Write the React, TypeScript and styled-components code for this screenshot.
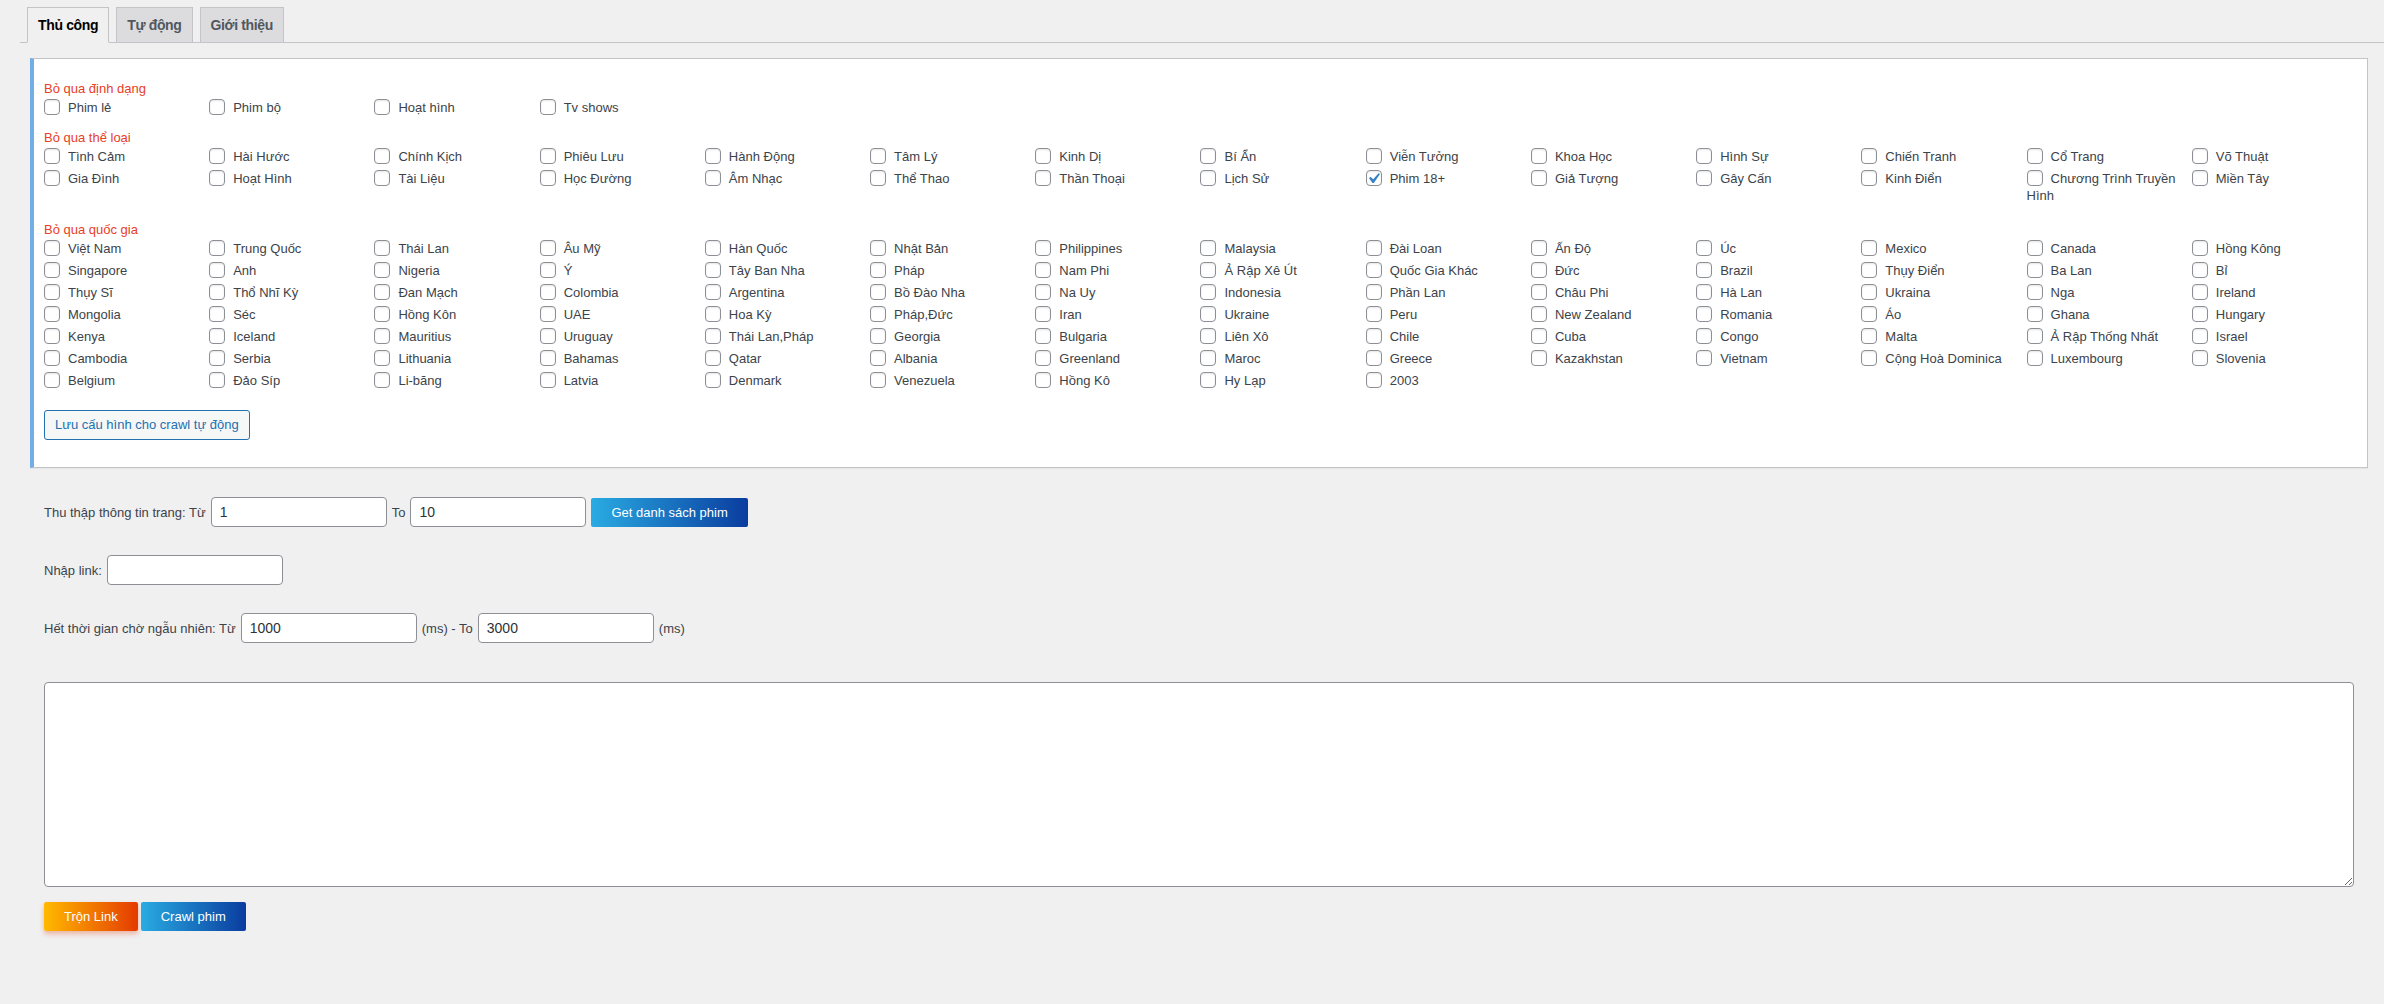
import React from "react";
import styled, { createGlobalStyle, css } from "styled-components";

const GlobalStyle = createGlobalStyle`
  html, body {
    margin: 0;
    padding: 0;
    background: #f0f0f1;
  }
  body {
    font-family: "Liberation Sans", Arial, sans-serif;
    font-size: 13px;
    color: #3c434a;
  }
  * { box-sizing: border-box; }
`;

const Page = styled.div`
  min-height: 1004px;
  padding-bottom: 40px;
`;

const TabBar = styled.nav`
  display: flex;
  gap: 7px;
  margin-left: 20px;
  padding: 7px 0 0 7px;
  border-bottom: 1px solid #c3c4c7;
`;

const Tab = styled.a<{ $active?: boolean }>`
  display: block;
  font-size: 14px;
  line-height: 24px;
  font-weight: 600;
  letter-spacing: -0.35px;
  padding: 5px 10px;
  border: 1px solid #c3c4c7;
  margin-bottom: -1px;
  text-decoration: none;
  white-space: nowrap;
  cursor: pointer;
  ${(p) =>
    p.$active
      ? css`
          background: #f0f0f1;
          color: #000;
          border-bottom-color: #f0f0f1;
        `
      : css`
          background: #dcdcde;
          color: #50575e;
        `}
`;

const Panel = styled.section`
  margin: 15px 16px 0 30px;
  background: #fff;
  border: 1px solid #c3c4c7;
  border-left: 4px solid #72aee6;
  box-shadow: 0 1px 1px rgba(0, 0, 0, 0.04);
  padding: 21px 10px 27px 10px;
`;

const Section = styled.div<{ $after: number }>`
  margin-bottom: ${(p) => p.$after}px;
`;

const SectionTitle = styled.div`
  color: #e8401f;
  font-size: 13px;
  line-height: 17px;
  margin-bottom: 2px;
`;

const OptionGrid = styled.div`
  display: grid;
  grid-template-columns: repeat(14, minmax(0, 1fr));
  row-gap: 5px;
`;

const Option = styled.label`
  display: block;
  font-size: 13px;
  line-height: 17px;
  color: #3c434a;
  padding-right: 10px;
  cursor: pointer;
`;

const Box = styled.span`
  position: relative;
  display: inline-block;
  vertical-align: middle;
  width: 16px;
  height: 16px;
  margin: -3px 8px 0 0;
  border: 1px solid #8c8f94;
  border-radius: 4px;
  background: #fff;
  box-shadow: inset 0 1px 2px rgba(0, 0, 0, 0.1);
`;

const Check = styled.svg`
  position: absolute;
  left: -4px;
  top: -3px;
  width: 21px;
  height: 21px;
`;

const SaveButton = styled.button`
  display: inline-block;
  margin-top: 21px;
  height: 30px;
  padding: 0 10px;
  border: 1px solid #2271b1;
  border-radius: 3px;
  background: #f6f7f7;
  color: #2271b1;
  font-family: inherit;
  font-size: 13px;
  line-height: 28px;
  cursor: pointer;
`;

const Form = styled.div`
  padding: 29px 30px 0 44px;
`;

const FieldRow = styled.div`
  display: flex;
  align-items: center;
  gap: 5px;
  height: 30px;
  margin-bottom: 28px;
  font-size: 13px;
  color: #3c434a;
`;

const TextInput = styled.input`
  width: 176px;
  height: 30px;
  padding: 0 8px;
  border: 1px solid #8c8f94;
  border-radius: 4px;
  background: #fff;
  color: #2c3338;
  font-family: inherit;
  font-size: 14px;
  box-shadow: 0 0 0 transparent;
`;

const gradients = {
  blue: "linear-gradient(90deg, #29abe2 0%, #0a3c9f 100%)",
  orange: "linear-gradient(90deg, #ffb900 0%, #e43b00 100%)",
};

const GradientButton = styled.button<{ $tone: "blue" | "orange" }>`
  height: 29px;
  padding: 0 20px;
  border: none;
  border-radius: 2px;
  background: ${(p) => gradients[p.$tone]};
  color: #fff;
  font-family: inherit;
  font-size: 13px;
  white-space: nowrap;
  cursor: pointer;
  ${(p) =>
    p.$tone === "orange" &&
    css`
      box-shadow: 0 3px 5px rgba(228, 70, 20, 0.35);
    `}
`;

const LogArea = styled.textarea`
  display: block;
  width: 100%;
  height: 205px;
  margin-top: 39px;
  border: 1px solid #8c8f94;
  border-radius: 4px;
  background: #fff;
  font-family: inherit;
  font-size: 14px;
  padding: 2px 6px;
`;

const Actions = styled.div`
  display: flex;
  gap: 3px;
  margin-top: 15px;
`;

const formats = ["Phim lẻ", "Phim bộ", "Hoạt hình", "Tv shows"];

const genres = [
  "Tình Cảm", "Hài Hước", "Chính Kịch", "Phiêu Lưu", "Hành Động", "Tâm Lý", "Kinh Dị",
  "Bí Ẩn", "Viễn Tưởng", "Khoa Học", "Hình Sự", "Chiến Tranh", "Cổ Trang", "Võ Thuật",
  "Gia Đình", "Hoạt Hình", "Tài Liệu", "Học Đường", "Âm Nhạc", "Thể Thao", "Thần Thoại",
  "Lịch Sử", "Phim 18+", "Giả Tượng", "Gây Cấn", "Kinh Điển", "Chương Trình Truyền Hình", "Miền Tây",
];

const countries = [
  "Việt Nam", "Trung Quốc", "Thái Lan", "Âu Mỹ", "Hàn Quốc", "Nhật Bản", "Philippines",
  "Malaysia", "Đài Loan", "Ấn Độ", "Úc", "Mexico", "Canada", "Hồng Kông",
  "Singapore", "Anh", "Nigeria", "Ý", "Tây Ban Nha", "Pháp", "Nam Phi",
  "Ả Rập Xê Út", "Quốc Gia Khác", "Đức", "Brazil", "Thụy Điển", "Ba Lan", "Bỉ",
  "Thụy Sĩ", "Thổ Nhĩ Kỳ", "Đan Mạch", "Colombia", "Argentina", "Bồ Đào Nha", "Na Uy",
  "Indonesia", "Phần Lan", "Châu Phi", "Hà Lan", "Ukraina", "Nga", "Ireland",
  "Mongolia", "Séc", "Hồng Kôn", "UAE", "Hoa Kỳ", "Pháp,Đức", "Iran",
  "Ukraine", "Peru", "New Zealand", "Romania", "Áo", "Ghana", "Hungary",
  "Kenya", "Iceland", "Mauritius", "Uruguay", "Thái Lan,Pháp", "Georgia", "Bulgaria",
  "Liên Xô", "Chile", "Cuba", "Congo", "Malta", "Ả Rập Thống Nhất", "Israel",
  "Cambodia", "Serbia", "Lithuania", "Bahamas", "Qatar", "Albania", "Greenland",
  "Maroc", "Greece", "Kazakhstan", "Vietnam", "Cộng Hoà Dominica", "Luxembourg", "Slovenia",
  "Belgium", "Đảo Síp", "Li-băng", "Latvia", "Denmark", "Venezuela", "Hồng Kô",
  "Hy Lạp", "2003",
];

const checked = new Set(["Phim 18+"]);

function Checkbox({ on }: { on: boolean }) {
  return (
    <Box role="checkbox" aria-checked={on}>
      {on && (
        <Check viewBox="0 0 20 20" aria-hidden>
          <path d="M14.83 4.89l1.34.94-5.81 8.38H9.02L5.78 9.67l1.34-1.25 2.57 2.4z" fill="#3582c4" />
        </Check>
      )}
    </Box>
  );
}

function OptionSection({ title, items, after }: { title: string; items: string[]; after: number }) {
  return (
    <Section $after={after}>
      <SectionTitle>{title}</SectionTitle>
      <OptionGrid>
        {items.map((it) => (
          <Option key={it}>
            <Checkbox on={checked.has(it)} />
            {it}
          </Option>
        ))}
      </OptionGrid>
    </Section>
  );
}

export default function App() {
  return (
    <Page>
      <GlobalStyle />
      <TabBar>
        <Tab $active>Thủ công</Tab>
        <Tab>Tự động</Tab>
        <Tab>Giới thiệu</Tab>
      </TabBar>
      <Panel>
        <OptionSection title="Bỏ qua định dạng" items={formats} after={13} />
        <OptionSection title="Bỏ qua thể loại" items={genres} after={17} />
        <OptionSection title="Bỏ qua quốc gia" items={countries} after={0} />
        <SaveButton>Lưu cấu hình cho crawl tự động</SaveButton>
      </Panel>
      <Form>
        <FieldRow>
          <span>Thu thập thông tin trang: Từ</span>
          <TextInput defaultValue="1" />
          <span>To</span>
          <TextInput defaultValue="10" />
          <GradientButton $tone="blue">Get danh sách phim</GradientButton>
        </FieldRow>
        <FieldRow>
          <span>Nhập link:</span>
          <TextInput defaultValue="" />
        </FieldRow>
        <FieldRow>
          <span>Hết thời gian chờ ngẫu nhiên: Từ</span>
          <TextInput defaultValue="1000" />
          <span>(ms) - To</span>
          <TextInput defaultValue="3000" />
          <span>(ms)</span>
        </FieldRow>
        <LogArea />
        <Actions>
          <GradientButton $tone="orange">Trộn Link</GradientButton>
          <GradientButton $tone="blue">Crawl phim</GradientButton>
        </Actions>
      </Form>
    </Page>
  );
}
